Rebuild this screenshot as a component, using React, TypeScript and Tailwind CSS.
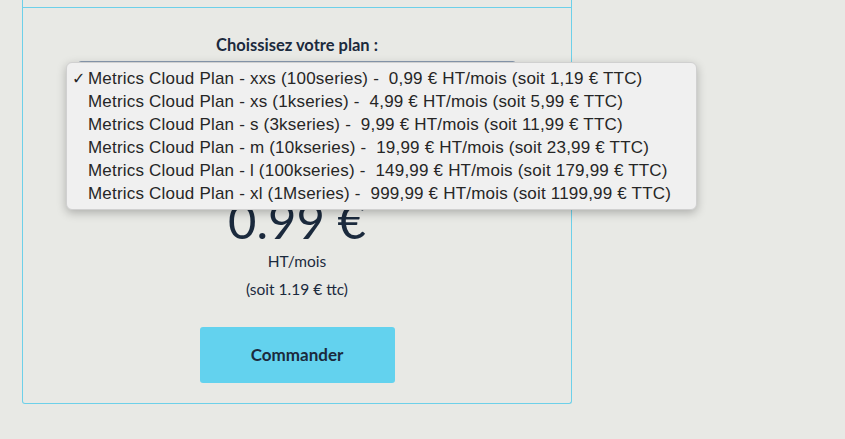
const plans = [
  "Metrics Cloud Plan - xxs (100series) -  0,99 € HT/mois (soit 1,19 € TTC)",
  "Metrics Cloud Plan - xs (1kseries) -  4,99 € HT/mois (soit 5,99 € TTC)",
  "Metrics Cloud Plan - s (3kseries) -  9,99 € HT/mois (soit 11,99 € TTC)",
  "Metrics Cloud Plan - m (10kseries) -  19,99 € HT/mois (soit 23,99 € TTC)",
  "Metrics Cloud Plan - l (100kseries) -  149,99 € HT/mois (soit 179,99 € TTC)",
  "Metrics Cloud Plan - xl (1Mseries) -  999,99 € HT/mois (soit 1199,99 € TTC)",
];

export default function App() {
  return (
    <div className="relative min-h-[439px] bg-[#e8e9e5] pl-[22px] font-['Lato',sans-serif] text-[#1b2a3d]">
      <div className="w-[550px] rounded-b-[3px] border-x border-b border-[#6dd0e9]">
        <div className="h-[8px] border-b border-[#6dd0e9]" />
        <div className="flex flex-col items-center pb-[20px] pt-[27px]">
          <label className="text-[16.5px] font-bold leading-[20px]">Choissisez votre plan :</label>
          <div className="mt-[6px] h-[34px] w-[438px] rounded-[3px] border border-[#8a9bb0] bg-white" />
          <div className="mt-[100px] text-[49px] font-normal leading-[50px]">0.99 €</div>
          <div className="mt-[6px] text-[15.5px] leading-[20px]">HT/mois</div>
          <div className="mt-[8px] text-[15.5px] leading-[20px]">(soit 1.19 € ttc)</div>
          <button className="mt-[28px] h-[56px] w-[195px] rounded-[3px] bg-[#63d2ee] text-[17px] font-bold">
            Commander
          </button>
        </div>
      </div>

      <div className="absolute left-[66px] top-[62px] w-[631px] rounded-[6px] border border-[#d0d0d0] bg-[#f0f0f0] py-[4px] font-['Liberation_Sans',sans-serif] text-[17px] tracking-[0.2px] text-[#262626] shadow-[0_3px_10px_rgba(0,0,0,0.25)]">
        {plans.map((p, i) => (
          <div key={p} className="flex h-[23px] items-center">
            <span className="w-[21px] pl-[5px] font-['DejaVu_Sans',sans-serif] text-[16px] leading-none">
              {i === 0 ? "✓" : ""}
            </span>
            <span className="whitespace-pre">{p}</span>
          </div>
        ))}
      </div>
    </div>
  );
}
